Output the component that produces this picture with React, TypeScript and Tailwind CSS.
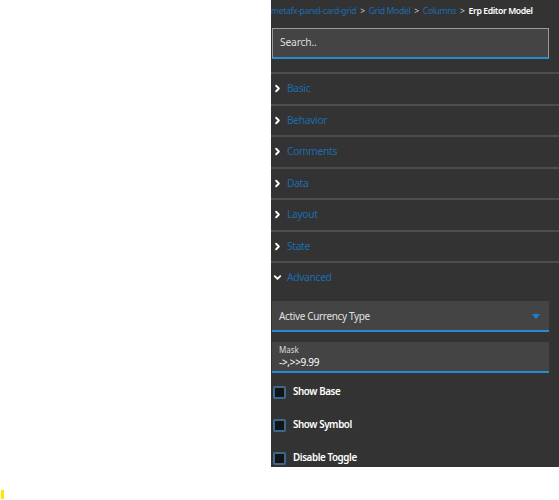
import { ChevronRight, ChevronDown } from 'lucide-react'

const sections = ['Basic', 'Behavior', 'Comments', 'Data', 'Layout', 'State']

function Section({ label, open }: { label: string; open?: boolean }) {
  return (
    <div className="h-[31.5px] border-t-2 border-[#4d4d4d] flex items-center pl-[1px] gap-[4px]">
      {open ? (
        <ChevronDown size={11} strokeWidth={4} className="text-white" />
      ) : (
        <ChevronRight size={11} strokeWidth={4} className="text-white" />
      )}
      <span className="text-[10.3px] tracking-[-0.35px] text-[#1b6cb0]">{label}</span>
    </div>
  )
}

function Check({ label }: { label: string }) {
  return (
    <div className="h-[33px] flex items-center gap-[7px] pl-[2px]">
      <span className="w-[13px] h-[13px] bg-[#141414] border-2 border-[#3c6790] rounded-[2px]" />
      <span className="text-[9.8px] tracking-[-0.4px] font-semibold text-white">{label}</span>
    </div>
  )
}

export default function App() {
  return (
    <div className="w-[559px] h-[500px] bg-white" style={{ fontFamily: '"Noto Sans", "Open Sans", sans-serif' }}>
      <div className="ml-[271px] w-[288px] h-[467px] bg-[#333333] overflow-hidden">
        <div className="h-[24px] flex items-center gap-[4px] text-[8.7px] tracking-[-0.4px] whitespace-nowrap">
          <span className="text-[#1b6cb0]">metafx-panel-card-grid</span>
          <span className="text-[#ccc]">&gt;</span>
          <span className="text-[#1b6cb0]">Grid Model</span>
          <span className="text-[#ccc]">&gt;</span>
          <span className="text-[#1b6cb0]">Columns</span>
          <span className="text-[#ccc]">&gt;</span>
          <span className="text-white font-semibold">Erp Editor Model</span>
        </div>
        <div className="mt-[4px] ml-[1px] w-[277px] h-[31px] bg-[#444] border border-[#9a9a9a] border-b-2 border-b-[#2a8ad0] flex items-center px-[7px]">
          <span className="text-[10.3px] tracking-[-0.2px] text-[#ddd]">Search..</span>
        </div>
        <div className="h-[13px]" />
        {sections.map((s) => (
          <Section key={s} label={s} />
        ))}
        <Section label="Advanced" open />
        <div className="mt-[8px] ml-[1px] w-[277px] h-[31px] bg-[#444] border-b-2 border-[#2a8ad0] flex items-center justify-between pl-[7px] pr-[9px] pt-[3px]">
          <span className="text-[10px] tracking-[-0.35px] text-[#e0e0e0]">Active Currency Type</span>
          <svg width="8" height="5" viewBox="0 0 8 5">
            <path d="M0 0 L8 0 L4 5 Z" fill="#1d7fd0" />
          </svg>
        </div>
        <div className="mt-[10px] ml-[1px] w-[277px] h-[31px] bg-[#444] border-b-2 border-[#2a8ad0] flex flex-col justify-center pl-[7px] leading-[12px]">
          <span className="text-[8px] text-[#ddd]">Mask</span>
          <span className="text-[10px] tracking-[-0.3px] text-white">-&gt;,&gt;&gt;9.99</span>
        </div>
        <div className="mt-[3px]">
          <Check label="Show Base" />
          <Check label="Show Symbol" />
          <Check label="Disable Toggle" />
        </div>
      </div>
      <div className="mt-[23px] ml-[1px] w-[3px] h-[9px] bg-[#ffe600]" />
    </div>
  )
}
